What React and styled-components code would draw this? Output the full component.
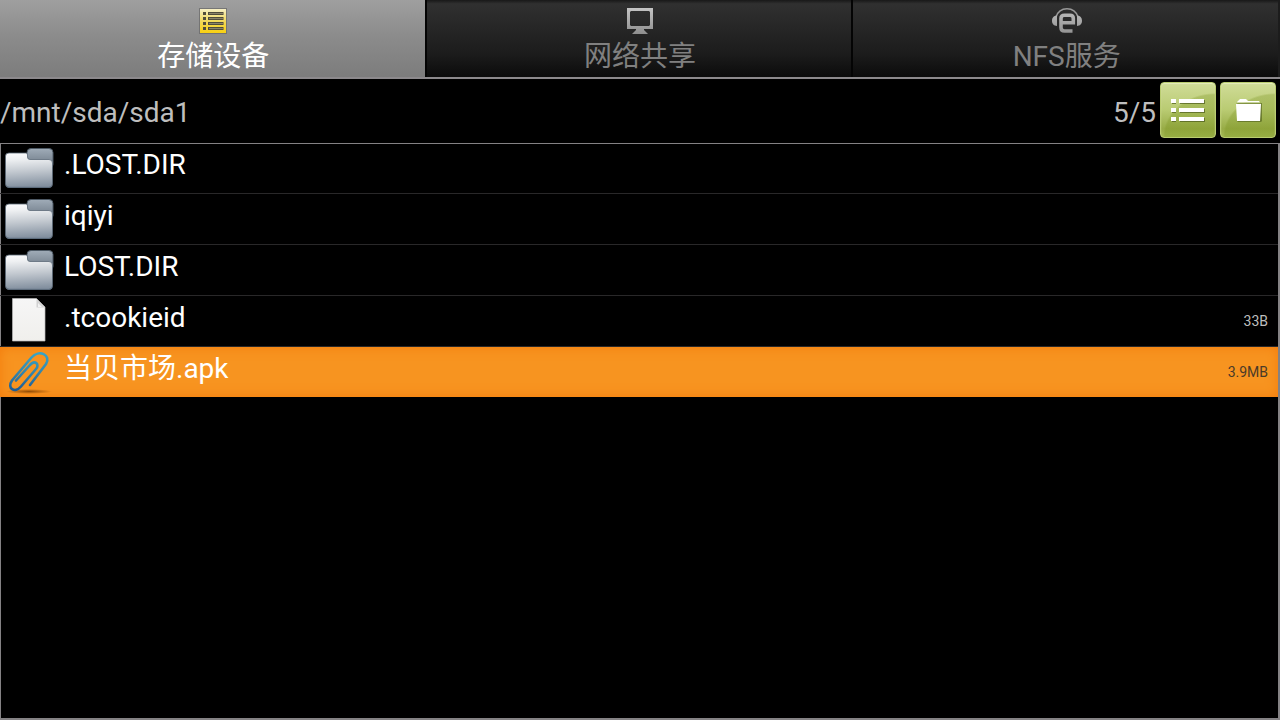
import { useState } from 'react'
import styled, { createGlobalStyle } from 'styled-components';

const GlobalStyle = createGlobalStyle`
    * {
        box-sizing: border-box;
    }

    body {
        margin: 0;
        background: #000;
        font-family: Roboto, 'Noto Sans CJK SC', sans-serif;
    }
`

const Page = styled.main`
    display: flex;
    flex-direction: column;
    min-height: 100vh;
    background: #000;
`

const Tabs = styled.nav`
    display: flex;
    border-bottom: 2px solid #8c898c;
`

const Tab = styled.button`
    flex: 1 1 0;
    display: flex;
    flex-direction: column;
    align-items: center;
    height: 77px;
    padding: 6px 0 0 2px;
    border: none;
    border-right: 2px solid #040404;
    background: ${props => props.$active
        ? 'linear-gradient(#9f9f9f, #8c8c8c 45%, #828282 80%, #7c7c7c)'
        : 'linear-gradient(#181818, #303030 5%, #222 50%, #1c1c1c 70%, #0b0b0b)'};
    color: ${props => props.$active ? '#fff' : '#808080'};
    font-family: inherit;
    font-size: 28px;
    line-height: 42px;

    &:last-child {
        border-right-color: #1c1c1c;
    }

    &:focus {
        outline: none;
    }

    svg {
        display: block;
        flex: none;
    }
`

const Toolbar = styled.header`
    display: flex;
    align-items: center;
    gap: 4px;
    height: 64px;
    padding: 0 4px 2px 0;
    color: #bebebe;
    font-size: 28px;
    line-height: 32px;
`

const Path = styled.span`
    flex: 1;
    padding-top: 6px;
`

const Count = styled.span`
    padding-top: 6px;
`

const ToolButton = styled.button`
    width: 56px;
    height: 56px;
    padding: 0;
    border: 1px solid #b9cc70;
    border-radius: 4px;
    background:
        radial-gradient(ellipse 52px 44px at 100% 100%, rgba(120, 145, 30, 0.3) 96%, transparent 100%),
        linear-gradient(#d0dc98, #b9cb72 50%, #98ac46 85%, #a3b952);
    box-shadow: inset 0 1px 1px #e4ecbc;

    &:focus {
        outline: none;
    }

    svg {
        display: block;
    }
`

const FileList = styled.ul`
    flex: 1;
    margin: 0;
    padding: 0 2px 2px 0;
    list-style: none;
    box-shadow: inset 1px 1px #848284, inset -2px -2px #848284;
`

const FileRow = styled.button`
    display: flex;
    align-items: flex-start;
    width: 100%;
    height: 51px;
    padding: 0 10px 0 4px;
    border: none;
    border-bottom: 1px solid ${props => props.$selected ? 'transparent' : '#292829'};
    background: ${props => props.$selected ? '#f79420' : 'none'};
    background-clip: padding-box;
    box-shadow: ${props => props.$selected ? 'inset 0 0 12px #f47c0c' : 'none'};
    color: #fff;
    font-family: inherit;
    font-size: 28px;
    line-height: 32px;
    text-align: left;

    &:focus {
        outline: none;
    }

    svg {
        display: block;
        flex: none;
    }
`

const FileName = styled.span`
    flex: 1;
    padding: 6px 0 0 10px;
`

const FileSize = styled.span`
    padding-top: 15px;
    color: ${props => props.$selected ? '#4a3a28' : '#bebebe'};
    font-size: 14px;
    line-height: 20px;
`

const StorageIcon = () => (
    <svg width="30" height="30" viewBox="0 0 30 30" aria-hidden="true">
        <defs>
            <linearGradient id="storage" x1="0" y1="0" x2="0" y2="1">
                <stop offset="0" stopColor="#f6efc4" />
                <stop offset="0.5" stopColor="#f2d95c" />
                <stop offset="1" stopColor="#f8d010" />
            </linearGradient>
        </defs>
        <rect x="1" y="2" width="28" height="26" fill="#666" opacity="0.7" />
        <rect x="2" y="3" width="26" height="24" fill="url(#storage)" />
        {[6, 11, 16, 21].map(y => (
            <g key={y} fill="#514d3c">
                <rect x="5" y={y} width="3" height="3" />
                <rect x="10.500" y={y + 0.5} width="14.500" height="2" fill="#8a8368" stroke="#514d3c" strokeWidth="1" />
            </g>
        ))}
    </svg>
)

const MonitorIcon = () => (
    <svg width="30" height="30" viewBox="0 0 30 30" aria-hidden="true">
        <defs>
            <linearGradient id="monitor" x1="0" y1="0" x2="0" y2="1">
                <stop offset="0" stopColor="#c4c4c4" />
                <stop offset="1" stopColor="#8e8e8e" />
            </linearGradient>
        </defs>
        <path fill="url(#monitor)" fillRule="evenodd" d="M2 2H28V23H19V24L23 28H7L11 24V23H2ZM6 5L5 6V19L6 20H24L25 19V6L24 5Z" />
    </svg>
)

const HeadsetIcon = () => (
    <svg width="30" height="30" viewBox="0 0 30 30" aria-hidden="true">
        <defs>
            <linearGradient id="headset" x1="0" y1="0" x2="0" y2="30" gradientUnits="userSpaceOnUse">
                <stop offset="0" stopColor="#c4c4c4" />
                <stop offset="1" stopColor="#8e8e8e" />
            </linearGradient>
        </defs>
        <path fill="none" stroke="#999" strokeWidth="1.500" d="M4 11C6 5 10 2.800 15 2.800S24 5 26 11" />
        <path fill="url(#headset)" d="M5 9.500V20C2 20 0 18 0 14.800S2 9.500 5 9.500ZM25 9.500V20C28 20 30 18 30 14.800S28 9.500 25 9.500Z" />
        <path fill="none" stroke="url(#headset)" strokeWidth="3.600" d="M9.500 16.800H21.300V12.500Q21.300 9.300 18 9.300H12.500Q9 9.300 9 12.500V21.500Q9 25 12.500 25H20.500" />
    </svg>
)

const ListIcon = () => (
    <svg width="54" height="54" viewBox="0 0 54 54" aria-hidden="true">
        <g fill="#4d5b1d" opacity="0.7" transform="translate(1 1)">
            {[16, 25, 34].map(y => <path key={y} d={`M10 ${y}h4v4h-4zM18 ${y}h25v4h-25z`} />)}
        </g>
        <g fill="#fff">
            {[16, 25, 34].map(y => <path key={y} d={`M10 ${y}h5v4h-5zM18 ${y}h25v4h-25z`} />)}
        </g>
    </svg>
)

const FolderButtonIcon = () => (
    <svg width="54" height="54" viewBox="0 0 54 54" aria-hidden="true">
        <path fill="#4d5b1d" opacity="0.6" d="M17 20H41V38L40 39H17L16 38V21Z" />
        <path fill="#fff" d="M16 19L18 17L19 16H25L27 18H38L39 19.500H16ZM15 21H40L39 38H16Z" />
        <path stroke="#8a9b4a" strokeWidth="0.900" d="M15.500 20.300H40" />
    </svg>
)

const FolderIcon = () => (
    <svg width="50" height="50" viewBox="0 0 50 50" aria-hidden="true">
        <defs>
            <linearGradient id="folderBack" x1="0" y1="0" x2="0" y2="1">
                <stop offset="0" stopColor="#a0acb8" />
                <stop offset="1" stopColor="#66727f" />
            </linearGradient>
            <linearGradient id="folderFront" x1="0" y1="0" x2="0.080" y2="1">
                <stop offset="0" stopColor="#fdfdfe" />
                <stop offset="0.200" stopColor="#eef0f2" />
                <stop offset="0.550" stopColor="#c3c9d0" />
                <stop offset="1" stopColor="#8491a0" />
            </linearGradient>
        </defs>
        <rect x="23" y="5.500" width="26" height="20" rx="4" fill="url(#folderBack)" stroke="#4d5965" />
        <path fill="url(#folderFront)" stroke="#5c6977" strokeWidth="0.800" d="M5 10H22Q23.500 10 23.500 12V14Q23.500 16.500 26 16.500H45Q48.500 16.500 48.500 20V41Q48.500 44.500 45 44.500H5Q1.500 44.500 1.500 41V13Q1.500 10 5 10Z" />
        <path fill="none" stroke="#5f6f80" d="M2.500 43Q3.500 44.300 5 44.300H45Q46.500 44.300 47.500 43" />
    </svg>
)

const PageIcon = () => (
    <svg width="50" height="50" viewBox="0 0 50 50" aria-hidden="true">
        <defs>
            <linearGradient id="paper" x1="0" y1="0" x2="0" y2="1">
                <stop offset="0" stopColor="#f6f6f6" />
                <stop offset="1" stopColor="#f0efec" />
            </linearGradient>
        </defs>
        <path fill="url(#paper)" stroke="#b9b9b9" strokeWidth="0.700" d="M8.500 2.500H32.500L41 11V45H8.500Z" />
        <path fill="#d2d2d2" d="M32.500 3L41 11.500H32.500Z" />
        <path fill="#f2f2f2" d="M34 7L38 11H34Z" />
    </svg>
)

const ClipIcon = () => (
    <svg width="50" height="50" viewBox="0 0 50 50" aria-hidden="true">
        <defs>
            <linearGradient id="clip" x1="0" y1="0" x2="0" y2="1">
                <stop offset="0" stopColor="#38a3c4" />
                <stop offset="0.500" stopColor="#3487ad" />
                <stop offset="1" stopColor="#1d5c95" />
            </linearGradient>
            <radialGradient id="clipShadow">
                <stop offset="0" stopColor="#7a3c00" stopOpacity="0.800" />
                <stop offset="1" stopColor="#7a3c00" stopOpacity="0" />
            </radialGradient>
        </defs>
        <ellipse cx="25" cy="44.500" rx="23" ry="2.500" fill="url(#clipShadow)" />
        <path
            fill="none"
            stroke="url(#clip)"
            strokeWidth="2.600"
            strokeLinecap="round"
            d="M12 33.500L25.500 18.500C31 12 36 17.500 32 22L17 39.500C11 46.500 2.500 41.500 8 33.500L27.500 10.500C35 2 47.500 8 42 17L26 38"
        />
    </svg>
)

const tabs = [
    { id: 'storage', label: '存储设备', Icon: StorageIcon },
    { id: 'network', label: '网络共享', Icon: MonitorIcon },
    { id: 'nfs', label: 'NFS服务', Icon: HeadsetIcon },
]

const files = [
    { name: '.LOST.DIR', Icon: FolderIcon },
    { name: 'iqiyi', Icon: FolderIcon },
    { name: 'LOST.DIR', Icon: FolderIcon },
    { name: '.tcookieid', size: '33B', Icon: PageIcon },
    { name: '当贝市场.apk', size: '3.9MB', Icon: ClipIcon },
]

const App = () => {

    const [tab, setTab] = useState('storage')
    const [selected, setSelected] = useState(4)

    return (
        <Page>
            <GlobalStyle />
            <Tabs>
                {tabs.map(({ id, label, Icon }) => (
                    <Tab key={id} type="button" $active={id === tab} onClick={() => setTab(id)}>
                        <Icon />
                        {label}
                    </Tab>
                ))}
            </Tabs>
            <Toolbar>
                <Path>/mnt/sda/sda1</Path>
                <Count>{selected + 1}/{files.length}</Count>
                <ToolButton type="button" aria-label="列表"><ListIcon /></ToolButton>
                <ToolButton type="button" aria-label="文件夹"><FolderButtonIcon /></ToolButton>
            </Toolbar>
            <FileList>
                {files.map(({ name, size, Icon }, i) => (
                    <li key={name}>
                        <FileRow type="button" $selected={i === selected} onClick={() => setSelected(i)}>
                            <Icon />
                            <FileName>{name}</FileName>
                            {size && <FileSize $selected={i === selected}>{size}</FileSize>}
                        </FileRow>
                    </li>
                ))}
            </FileList>
        </Page>
    )
}

export default App
